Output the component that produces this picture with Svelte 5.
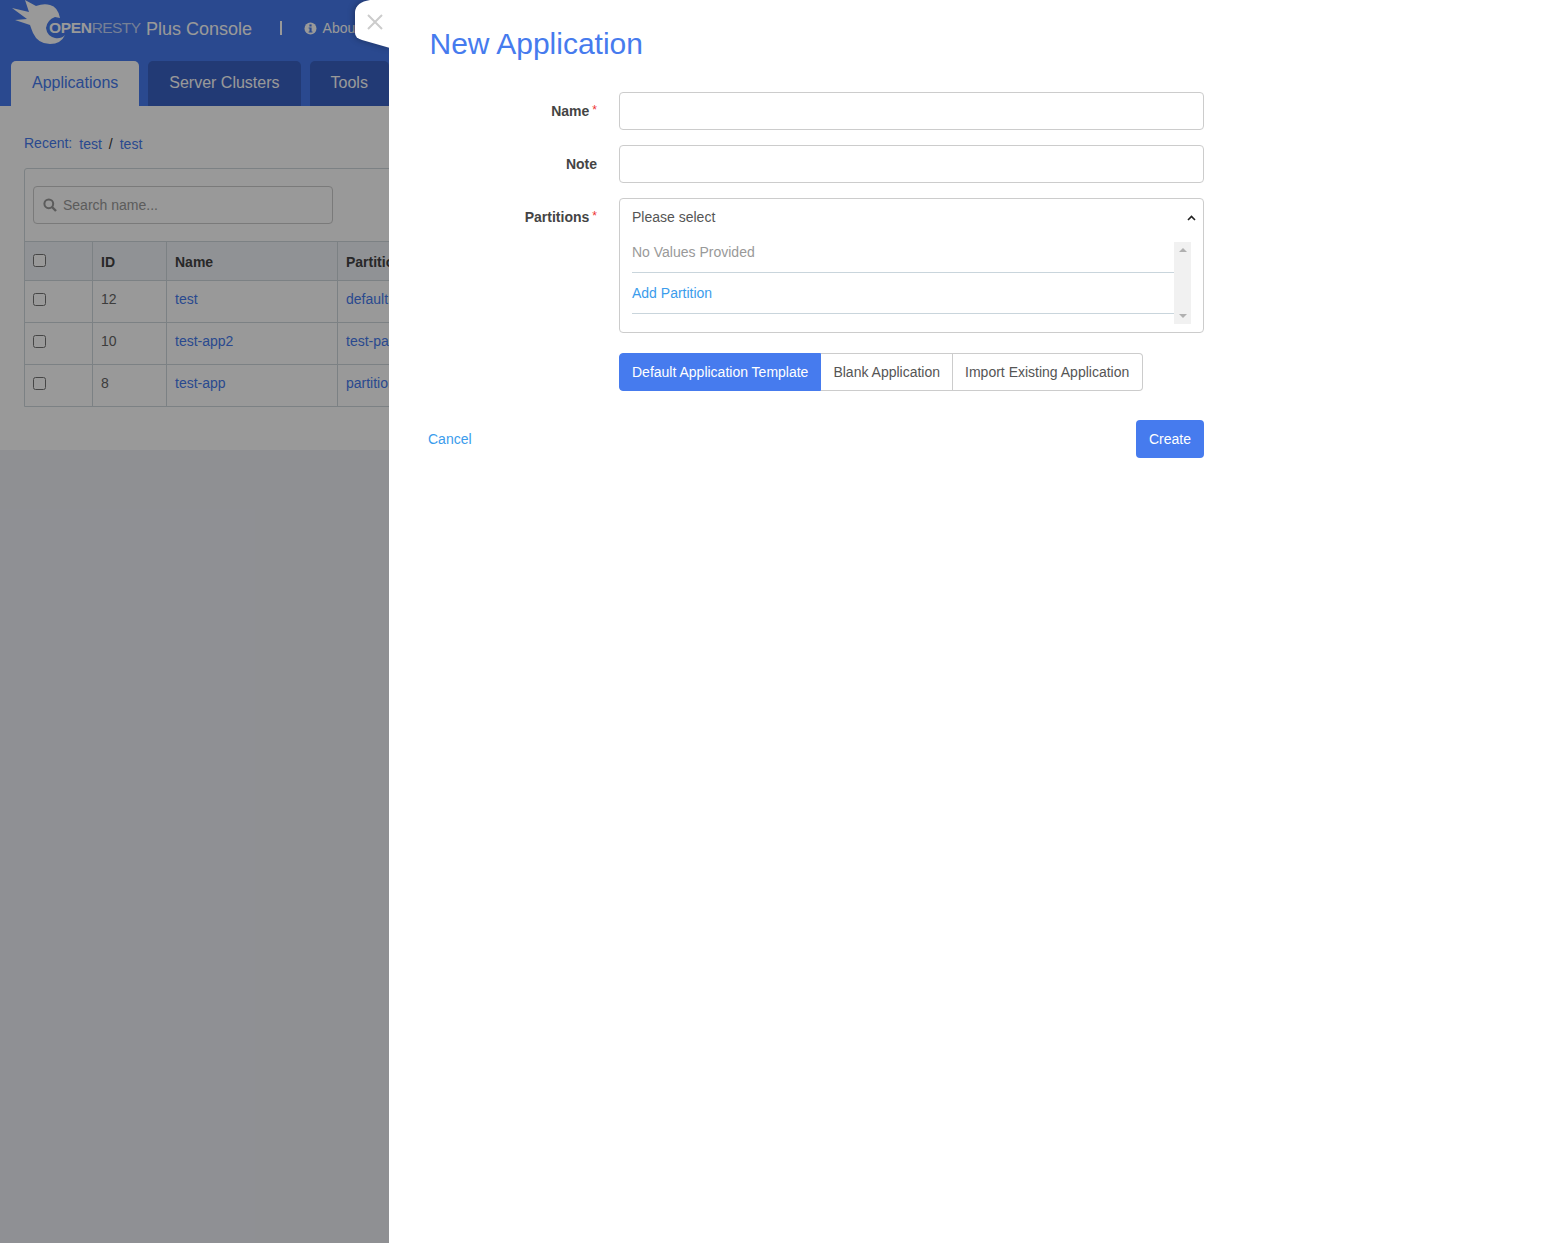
<script>
  const rows = [
    { id: 12, name: 'test', part: 'default' },
    { id: 10, name: 'test-app2', part: 'test-partition' },
    { id: 8, name: 'test-app', part: 'partition-1' }
  ];
</script>

<div class="root">
  <div class="page">
    <header class="top">
      <div class="brand">
        <svg class="bird" width="68" height="46" viewBox="0 0 68 46" aria-hidden="true">
          <path fill="#fff" d="M25 0 L36 6 Q44 3 50 5 Q58 7 60 18 L55 17 Q47 20 46 28 Q47 36 55 38 Q61 39 65 35 Q61 44 50 44 Q38 44 33 33 Q31 28 30 25 L15 20 L27 19 L12 8 L29 12 Z"/>
        </svg>
        <span class="logotext"><b>OPEN</b>RESTY</span>
        <span class="product">Plus Console</span>
        <span class="sep"></span>
        <svg class="info" width="13" height="13" viewBox="0 0 13 13" aria-hidden="true">
          <circle cx="6.5" cy="6.5" r="6" fill="#fff"/>
          <rect x="5.4" y="2.4" width="2.2" height="2.1" fill="#467bee"/>
          <path fill="#467bee" d="M4.6 5.4h3v4.2h.9v1h-3.9v-1h.9V6.4h-.9z"/>
        </svg>
        <span class="about">About</span>
      </div>
      <nav class="tabs">
        <span class="tab active">Applications</span>
        <span class="tab">Server Clusters</span>
        <span class="tab">Tools</span>
      </nav>
    </header>

    <main class="content">
      <div class="recent">
        <span>Recent:</span>
        <span class="crumbs"><a href="#a">test</a><i>/</i><a href="#a">test</a></span>
      </div>
      <section class="card">
        <div class="toolbar">
          <div class="search">
            <svg width="14" height="14" viewBox="0 0 14 14" aria-hidden="true">
              <circle cx="5.8" cy="5.8" r="4.4" fill="none" stroke="#999" stroke-width="2"/>
              <path d="M9 9l4 4" stroke="#999" stroke-width="2.4"/>
            </svg>
            <span>Search name...</span>
          </div>
        </div>
        <table>
          <thead>
            <tr>
              <th class="c0"><input type="checkbox" /></th>
              <th class="c1">ID</th>
              <th class="c2">Name</th>
              <th class="c3">Partition</th>
            </tr>
          </thead>
          <tbody>
            {#each rows as r}
              <tr>
                <td class="c0"><input type="checkbox" /></td>
                <td class="c1">{r.id}</td>
                <td class="c2"><a href="#a">{r.name}</a></td>
                <td class="c3"><a href="#a">{r.part}</a></td>
              </tr>
            {/each}
          </tbody>
        </table>
      </section>
    </main>
  </div>

  <div class="scrim"></div>

  <svg class="closetab" width="40" height="56" viewBox="0 0 40 56" aria-hidden="true">
    <path fill="#fff" d="M40 0 H20 Q6 2 5 12 V33 Q5 38 12 40 L40 48 Z"/>
    <path d="M18 15 L32 29 M32 15 L18 29" stroke="#ccc" stroke-width="2" fill="none"/>
  </svg>

  <aside class="drawer">
    <h1>New Application</h1>
    <form class="form">
      <label class="lbl" for="n">Name<em>*</em></label>
      <input id="n" class="input" />
      <label class="lbl" for="m">Note</label>
      <input id="m" class="input" />
      <span class="lbl tall">Partitions<em>*</em></span>
      <div class="select">
        <div class="selhead">
          <span>Please select</span>
          <svg width="9" height="6" viewBox="0 0 9 6" aria-hidden="true">
            <path d="M1 5l3.5-3.5L8 5" fill="none" stroke="#222" stroke-width="1.6"/>
          </svg>
        </div>
        <div class="list">
          <div class="items">
            <div class="item muted">No Values Provided</div>
            <div class="item add">Add Partition</div>
          </div>
          <div class="scrollbar">
            <span class="up"></span>
            <span class="down"></span>
          </div>
        </div>
      </div>
      <span></span>
      <div class="group">
        <span class="seg on">Default Application Template</span>
        <span class="seg">Blank Application</span>
        <span class="seg">Import Existing Application</span>
      </div>
    </form>
    <div class="foot">
      <a href="#c" class="cancel">Cancel</a>
      <button type="button" class="create">Create</button>
    </div>
  </aside>
</div>

<style>
  :global(body) { margin: 0; }
  .root {
    position: relative;
    width: 100%;
    height: 1243px;
    overflow: hidden;
    background: #eef0f6;
    font-family: "Liberation Sans", Arial, sans-serif;
    font-size: 14px;
    color: #555;
  }
  a { color: #467bee; text-decoration: none; }

  .top { background: #467bee; height: 106px; display: flex; flex-direction: column; }
  .brand { height: 61px; display: flex; align-items: center; color: #fff; white-space: nowrap; }
  .bird { flex: none; margin-top: -16px; }
  .logotext { font-size: 15.5px; margin-left: -19px; margin-top: -6px; letter-spacing: -.6px; color: #ffffffb0; width: 93px; }
  .logotext b { color: #fff; font-weight: 700; letter-spacing: -.3px; }
  .product { font-size: 18px; margin-left: 4px; margin-top: -3px; }
  .sep { width: 2px; height: 14px; background: #fff; margin: -6px 21.5px 0 28px; }
  .info { margin-top: -5px; }
  .about { margin-left: 6px; margin-top: -5px; }
  .tabs { display: flex; gap: 9px; padding-left: 11px; height: 45px; }
  .tab {
    background: #3a61c3;
    color: #fff;
    font-size: 16px;
    padding: 13px 21px 0;
    border-radius: 5px 5px 0 0;
  }
  .tab.active { background: #fff; color: #467bee; }

  .content { background: #fff; height: 344px; padding: 28px 24px 0; box-sizing: border-box; }
  .recent { display: flex; gap: 7px; color: #467bee; line-height: 18px; height: 34px; }
  .crumbs { margin-top: 1px; }
  .crumbs i { font-style: normal; color: #333; margin: 0 7px; }
  .card { border: 1px solid #cfd8dc; border-radius: 3px 3px 0 0; width: 1515px; }
  .toolbar { padding: 17px 8px; height: 38px; }
  .search {
    width: 300px;
    height: 38px;
    box-sizing: border-box;
    border: 1px solid #ccc;
    border-radius: 4px;
    display: flex;
    align-items: center;
    gap: 6px;
    padding-left: 9px;
    color: #999;
  }
  table { border-collapse: collapse; width: 100%; table-layout: fixed; }
  th, td { border: 1px solid #cfd8dc; text-align: left; padding: 0 8px; box-sizing: border-box; }
  tr > :first-child { border-left: 0; }
  tr > :last-child { border-right: 0; }
  th { background: #f1f3f9; height: 39px; padding-top: 2px; color: #444; font-weight: 700; }
  td { height: 42px; padding-bottom: 6px; color: #666; }
  tbody tr:last-child td { border-bottom: 0; height: 41px; padding-bottom: 4px; }
  th.c1, td.c1, th.c2, td.c2, th.c3, td.c3 { padding-left: 8.5px; }
  .c0 { width: 67px; }
  .c1 { width: 74px; }
  .c2 { width: 171px; }
  input[type="checkbox"] { margin: 0; width: 13px; height: 13px; display: block; position: relative; }
  th input[type="checkbox"] { top: -2px; }
  td input[type="checkbox"] { top: 1px; }
  tbody tr:last-child input[type="checkbox"] { top: 0; }

  .scrim { position: absolute; inset: 0; background: rgba(0, 0, 0, .4); }

  .closetab { position: absolute; left: 350px; top: 0; filter: drop-shadow(-1px 0 3px rgba(0,0,0,.3)); }

  .drawer {
    position: absolute;
    left: 389px;
    right: 0;
    top: 0;
    bottom: 0;
    background: #fff;
  }
  h1 {
    margin: 0;
    padding: 26px 0 0 40.5px;
    height: 92px;
    box-sizing: border-box;
    color: #467bee;
    font-size: 30px;
    font-weight: 400;
    line-height: 36px;
  }
  .form {
    display: grid;
    grid-template-columns: 208px 585px;
    column-gap: 22px;
    row-gap: 15px;
    align-items: center;
  }
  .lbl { text-align: right; font-weight: 700; color: #444; line-height: 38px; }
  .lbl.tall { align-self: start; }
  .lbl em { font-style: normal; font-weight: 400; color: #e33; margin-left: 3px; font-size: 12px; line-height: 0; position: relative; top: -2px; }
  .input {
    height: 38px;
    box-sizing: border-box;
    border: 1px solid #ccc;
    border-radius: 4px;
    padding: 0 12px;
    outline: none;
    background: #fff;
  }
  .select {
    height: 135px;
    box-sizing: border-box;
    border: 1px solid #ccc;
    border-radius: 4px;
    padding: 0 12px;
    color: #555;
  }
  .selhead { display: flex; justify-content: space-between; align-items: center; height: 36px; }
  .selhead svg { margin-top: 2px; margin-right: -5px; }
  .list { display: flex; height: 82px; margin-top: 7px; }
  .items { flex: 1; }
  .item { height: 30px; line-height: 20px; border-bottom: 1px solid #c9d5dc; }
  .item.muted { color: #999; }
  .item.add { color: #3b9cec; margin-top: 10px; }
  .scrollbar {
    width: 17px;
    background: #f1f1f1;
    display: flex;
    flex-direction: column;
    justify-content: space-between;
    align-items: center;
    padding: 6px 0;
    box-sizing: border-box;
  }
  .up, .down { width: 0; height: 0; border-left: 4px solid transparent; border-right: 4px solid transparent; }
  .up { border-bottom: 4px solid #b0b0b0; }
  .down { border-top: 4px solid #b0b0b0; }
  .group { display: flex; height: 38px; box-sizing: border-box; margin-top: 5px; }
  .seg {
    border: 1px solid #ccc;
    border-left-width: 0;
    padding: 0 12px;
    line-height: 36px;
    color: #555;
  }
  .seg:last-child { border-radius: 0 4px 4px 0; padding-right: 13px; }
  .seg.on {
    background: #467bee;
    border: 1px solid #467bee;
    border-radius: 4px 0 0 4px;
    color: #fff;
  }
  .foot {
    width: 815px;
    box-sizing: border-box;
    margin-top: 29px;
    padding-left: 39px;
    display: flex;
    justify-content: space-between;
    align-items: center;
  }
  .cancel { color: #3b9cec; }
  .create {
    width: 68px;
    height: 38px;
    border: 0;
    border-radius: 4px;
    background: #467bee;
    color: #fff;
    font: inherit;
  }
</style>
